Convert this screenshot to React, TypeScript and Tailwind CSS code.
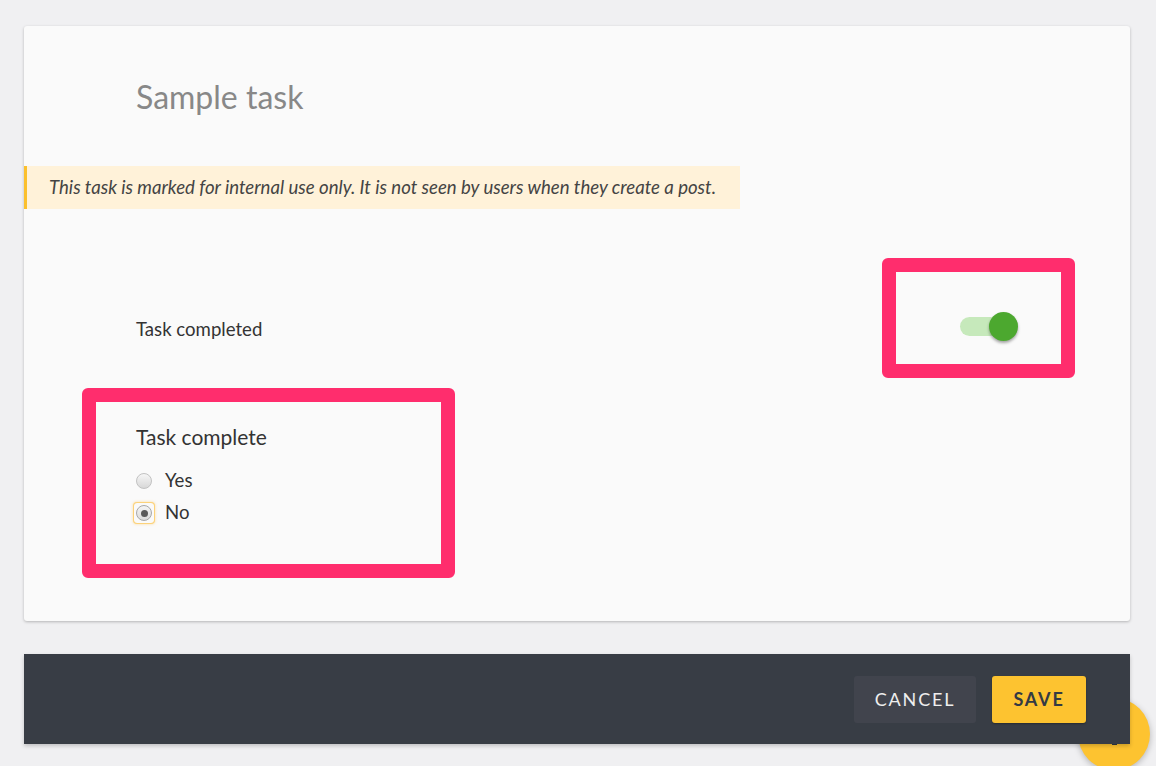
export default function App() {
  return (
    <div className="relative min-h-[766px] w-full overflow-hidden bg-[#f0f0f2] font-['Lato','Noto_Sans',sans-serif]">
      <div className="h-[26px]" />
      {/* card */}
      <div className="mx-[24px] w-[1106px] rounded-[3px] bg-[#fafafa] pb-[43px] shadow-[0_1px_3px_rgba(0,0,0,0.25)]">
        <h1 className="pl-[112px] pt-[52px] text-[32px] leading-[38px] text-[#888888]">
          Sample task
        </h1>

        <div className="mt-[50px] flex h-[43px] w-[716px] items-center border-l-[3px] border-[#fbc02d] bg-[#fff2d9] pl-[22px]">
          <p className="text-[18.6px] italic text-[#444444]">
            This task is marked for internal use only. It is not seen by users when they create a post.
          </p>
        </div>

        <div className="mt-[49px] flex items-start justify-between">
          <span className="pl-[112px] pt-[60px] text-[18.6px] leading-[22px] text-[#333333]">
            Task completed
          </span>
          <div className="mr-[55px] h-[120px] w-[193px] rounded-[6px] border-[14px] border-[#ff2d6d] pl-[64px] pt-[45px]">
            <div className="relative h-[19px] w-[40px] rounded-full bg-[#c6e9bb]">
              <span className="absolute left-[29px] top-[-5px] h-[29px] w-[29px] rounded-full bg-[#4ca82f] shadow-[0_2px_3px_rgba(0,0,0,0.35)]" />
            </div>
          </div>
        </div>

        <div className="ml-[58px] mt-[10px] h-[190px] w-[373px] rounded-[6px] border-[14px] border-[#ff2d6d] pl-[40px] pt-[21px]">
          <h2 className="text-[21px] leading-[28px] text-[#333333]">Task complete</h2>
          <div className="mt-[20px] flex flex-col gap-[12px]">
            <label className="flex h-[20px] items-center gap-[13px] text-[18.6px] text-[#333333]">
              <span className="h-[16px] w-[16px] shrink-0 rounded-full border border-[#c2c2c2] bg-gradient-to-b from-[#f6f6f6] to-[#d8d8d8]" />
              Yes
            </label>
            <label className="flex h-[20px] items-center gap-[13px] text-[18.6px] text-[#333333]">
              <span className="relative flex h-[16px] w-[16px] shrink-0 items-center justify-center rounded-full border border-[#a8a8a8] bg-gradient-to-b from-[#f4f4f4] to-[#dcdcdc]">
                <span className="h-[7px] w-[7px] rounded-full bg-[#5a5a5a]" />
                <span className="absolute -inset-[3px] rounded-[3px] shadow-[0_0_0_1px_#fcd27a,0_0_3px_1px_rgba(252,200,100,0.6)]" />
              </span>
              No
            </label>
          </div>
        </div>
      </div>

      {/* footer */}
      <div className="relative z-10 mx-[24px] mt-[33px] flex h-[90px] w-[1106px] items-center justify-end gap-[16px] bg-[#383d45] pr-[44px] shadow-[0_2px_4px_rgba(0,0,0,0.2)]">
        <button className="h-[47px] w-[122px] rounded-[3px] bg-[#41444d] text-[18px] tracking-[0.1em] text-[#eeeeee]">
          CANCEL
        </button>
        <button className="h-[47px] w-[94px] rounded-[3px] bg-[#fdc330] text-[18px] font-bold tracking-[0.1em] text-[#343a44] shadow-[0_1px_2px_rgba(0,0,0,0.3)]">
          SAVE
        </button>
      </div>

      {/* floating action button */}
      <div className="absolute left-[1078px] top-[698px] h-[72px] w-[72px] rounded-full bg-[#fdc330] shadow-[0_2px_6px_rgba(0,0,0,0.25)]">
        <span className="absolute left-[34px] top-[43px] h-[4px] w-[5px] bg-[#333a44]" />
      </div>
    </div>
  );
}
